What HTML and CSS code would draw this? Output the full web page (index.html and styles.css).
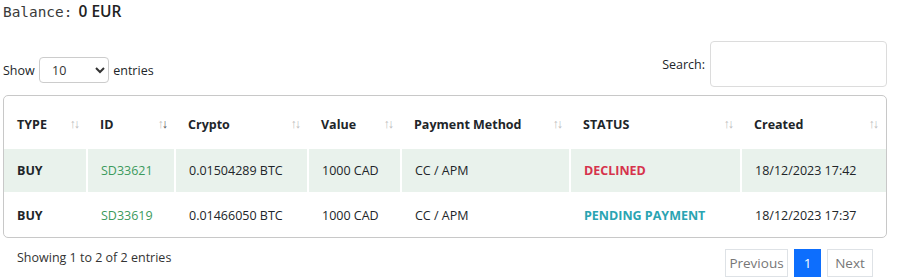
FILE: index.html
```html
<!DOCTYPE html>
<html lang="en">
  <head>
    <meta charset="UTF-8" />
    <title>Orders</title>
    <link rel="stylesheet" href="styles.css">
  </head>
  <body>
    <!-- Account balance -->
    <div class="balance">
      <code class="balance-label">Balance:</code>
      <span class="balance-value">0 EUR</span>
    </div>

    <!-- Length selector and search -->
    <div class="controls">
      <label class="length">
        Show
        <select>
          <option>10</option>
          <option>25</option>
          <option>50</option>
        </select>
        entries
      </label>
      <label class="search">
        Search:
        <input type="search" />
      </label>
    </div>

    <!-- Orders table -->
    <div class="table-box">
      <table class="orders">
        <thead>
          <tr>
            <th class="c-type">TYPE<span class="sort"><i>↑</i><i>↓</i></span></th>
            <th class="c-id">ID<span class="sort"><i>↑</i><i class="on">↓</i></span></th>
            <th class="c-crypto">Crypto<span class="sort"><i>↑</i><i>↓</i></span></th>
            <th class="c-value">Value<span class="sort"><i>↑</i><i>↓</i></span></th>
            <th class="c-method">Payment Method<span class="sort"><i>↑</i><i>↓</i></span></th>
            <th class="c-status">STATUS<span class="sort"><i>↑</i><i>↓</i></span></th>
            <th class="c-created">Created<span class="sort"><i>↑</i><i>↓</i></span></th>
          </tr>
        </thead>
        <tbody>
          <tr class="odd">
            <td class="strong">BUY</td>
            <td class="order-id">SD33621</td>
            <td>0.01504289 BTC</td>
            <td>1000 CAD</td>
            <td>CC / APM</td>
            <td class="status declined">DECLINED</td>
            <td>18/12/2023 17:42</td>
          </tr>
          <tr>
            <td class="strong">BUY</td>
            <td class="order-id">SD33619</td>
            <td>0.01466050 BTC</td>
            <td>1000 CAD</td>
            <td>CC / APM</td>
            <td class="status pending">PENDING PAYMENT</td>
            <td>18/12/2023 17:37</td>
          </tr>
        </tbody>
      </table>
    </div>

    <!-- Info and paging -->
    <div class="footer">
      <div class="info">Showing 1 to 2 of 2 entries</div>
      <div class="paging">
        <span class="page-btn prev">Previous</span>
        <span class="page-btn active">1</span>
        <span class="page-btn next">Next</span>
      </div>
    </div>
  </body>
</html>
```

FILE: styles.css
```css
/* Page */
body {
  font-family: "Open Sans", "Noto Sans", sans-serif;
  font-size: 12.5px;
  color: #212529;
  background-color: #fff;
  margin: 0;
  padding: 0 13px 0 3px;
}

/* Balance line */
.balance {
  height: 38px;
  line-height: 22px;
}
.balance-label {
  font-family: "DejaVu Sans Mono", monospace;
  font-size: 14.4px;
  color: #3a3a3a;
  margin-right: 3px;
}
.balance-value {
  font-weight: 600;
  font-size: 15.5px;
  color: #222;
}

/* Show entries / search */
.controls {
  display: flex;
  justify-content: space-between;
  align-items: flex-start;
  height: 57px;
  padding-top: 3px;
  box-sizing: border-box;
}
.length {
  padding-top: 16px;
}
.length select {
  width: 70px;
  height: 26px;
  margin: 0 1px;
  padding: 0 8px;
  font: inherit;
  color: #333;
  border: 1px solid #ccc;
  border-radius: 4px;
  background-color: #fff;
}
.search {
  display: flex;
  align-items: center;
}
.search input {
  width: 177px;
  height: 46px;
  margin-left: 5px;
  border: 1px solid #dcdcdc;
  border-radius: 4px;
  box-sizing: border-box;
}

/* Table frame */
.table-box {
  border: 1px solid #c8c8c8;
  border-radius: 5px;
  overflow: hidden;
}
.orders {
  width: 100%;
  border-collapse: collapse;
}
.orders th {
  position: relative;
  text-align: left;
  font-weight: 700;
  height: 52px;
  padding: 6px 0 0 13px;
  box-sizing: border-box;
}
.orders td {
  height: 43px;
  padding: 0 13px;
  border-left: 2px solid #fff;
  border-top: 2px solid #fff;
}
.orders td:first-child {
  border-left: 0;
}
.orders tr.odd td {
  background-color: #e9f2ec;
}

/* Column widths */
.c-type { width: 83px; }
.c-id { width: 88px; }
.c-crypto { width: 133px; }
.c-value { width: 93px; }
.c-method { width: 169px; }
.c-status { width: 171px; }

/* Sort arrows */
.sort {
  position: absolute;
  right: 9px;
  top: 19px;
  font-size: 12.5px;
  font-weight: 400;
  color: #bdbdbd;
  letter-spacing: -2px;
}
.sort i {
  font-style: normal;
}
.sort i.on {
  color: #555;
}

/* Cell styles */
.strong {
  font-weight: 700;
}
.order-id {
  color: #3c9a5c;
}
.status {
  font-weight: 700;
}
.declined {
  color: #d6334c;
}
.pending {
  color: #2aa4b2;
}

/* Footer */
.footer {
  display: flex;
  justify-content: space-between;
  align-items: flex-start;
  padding: 11px 0 0 14px;
}
.info {
  color: #333;
}
.paging {
  display: flex;
  gap: 6px;
  margin-right: 14px;
  font-size: 13.5px;
}
.page-btn {
  height: 28px;
  line-height: 26px;
  box-sizing: border-box;
  text-align: center;
  border: 1px solid #dee2e6;
  color: #777;
}
.page-btn.prev { width: 63px; }
.page-btn.next { width: 46px; }
.page-btn.active {
  width: 27px;
  background-color: #0d6efd;
  border-color: #0d6efd;
  color: #fff;
}
```
